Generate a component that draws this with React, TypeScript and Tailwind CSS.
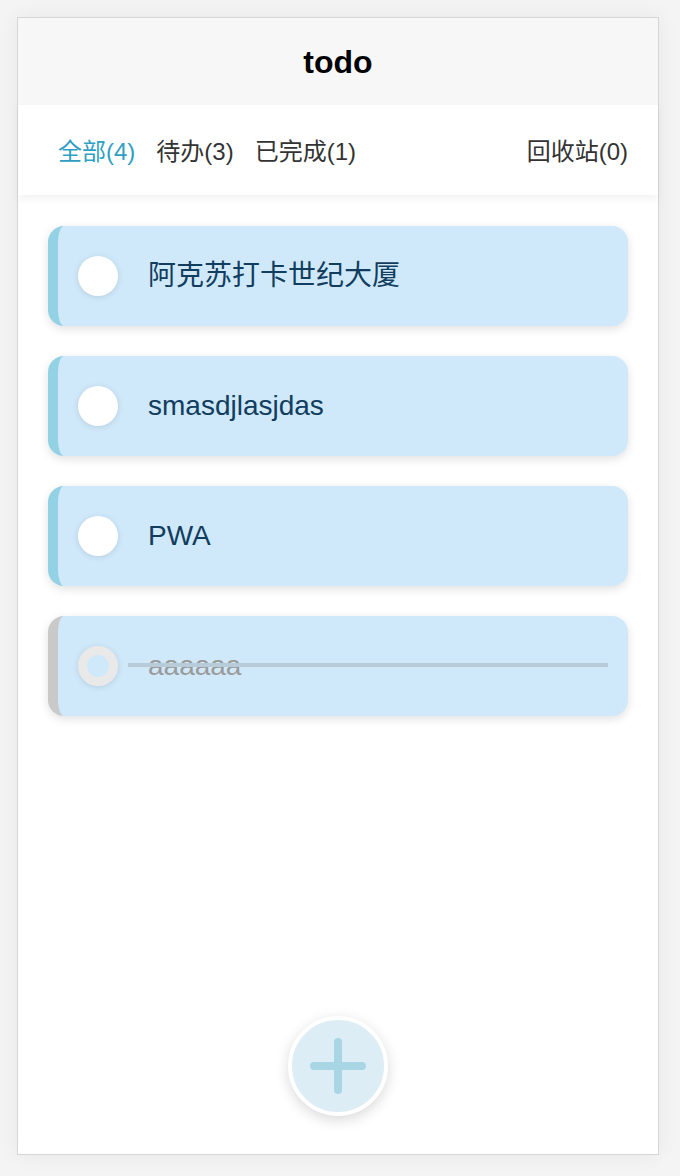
import React from 'react';

const font = { fontFamily: '"Liberation Sans", "Noto Sans CJK SC", sans-serif' };

type Todo = { text: string; done: boolean };

const todos: Todo[] = [
  { text: '阿克苏打卡世纪大厦', done: false },
  { text: 'smasdjlasjdas', done: false },
  { text: 'PWA', done: false },
  { text: 'aaaaaa', done: true },
];

const TodoCard: React.FC<{ todo: Todo }> = ({ todo }) => (
  <div
    className={`relative flex items-center h-[100px] rounded-[16px] bg-[#cfe9fb] shadow-[0_3px_10px_rgba(0,0,0,0.12)] border-l-[10px] ${
      todo.done ? 'border-l-[#c9c9c9]' : 'border-l-[#93d1e4]'
    }`}
  >
    {todo.done ? (
      <div className="ml-[20px] w-[40px] h-[40px] rounded-full border-[9px] border-[#e9e9e9] bg-[#cfe9fb] shadow-[0_1px_6px_rgba(0,0,0,0.12)]" />
    ) : (
      <div className="ml-[20px] w-[40px] h-[40px] rounded-full bg-white shadow-[0_1px_6px_rgba(0,0,0,0.12)]" />
    )}
    <span
      className={`ml-[30px] text-[28px] leading-none ${todo.done ? 'text-[#9a9a9a]' : 'text-[#123d5e]'}`}
    >
      {todo.text}
    </span>
    {todo.done && (
      <div className="absolute left-[70px] right-[20px] top-[47px] h-[4px] bg-[#b8cbd9]" />
    )}
  </div>
);

export default function App() {
  return (
    <div className="min-h-[1176px] bg-[#f4f4f4] pt-[17px] pl-[17px]" style={font}>
      <div className="relative w-[642px] h-[1138px] border border-[#d6d6d6] bg-white shadow-[0_0_20px_rgba(0,0,0,0.06)] flex flex-col">
        <div className="h-[87px] bg-[#f7f7f7] flex items-center justify-center">
          <h1 className="text-[32px] font-bold text-black leading-none">todo</h1>
        </div>
        <div className="relative z-10 h-[90px] bg-white shadow-[0_4px_8px_rgba(0,0,0,0.05)] flex items-center pl-[40px] pr-[30px] pt-[4px] text-[24px] text-[#333]">
          <span className="text-[#319fc4]">全部(4)</span>
          <span className="ml-[21px]">待办(3)</span>
          <span className="ml-[21px]">已完成(1)</span>
          <span className="ml-auto">回收站(0)</span>
        </div>
        <div className="flex flex-col gap-[30px] px-[30px] pt-[31px]">
          {todos.map((t) => (
            <TodoCard key={t.text} todo={t} />
          ))}
        </div>
        <button className="absolute left-1/2 -translate-x-1/2 bottom-[38px] w-[100px] h-[100px] rounded-full border-[4px] border-white bg-[#dcedf5] shadow-[0_4px_14px_rgba(0,0,0,0.15)] flex items-center justify-center">
          <svg width="56" height="56" viewBox="0 0 56 56">
            <path d="M28 4v48M4 28h48" stroke="#a9d6e4" strokeWidth="8" strokeLinecap="round" />
          </svg>
        </button>
      </div>
    </div>
  );
}
